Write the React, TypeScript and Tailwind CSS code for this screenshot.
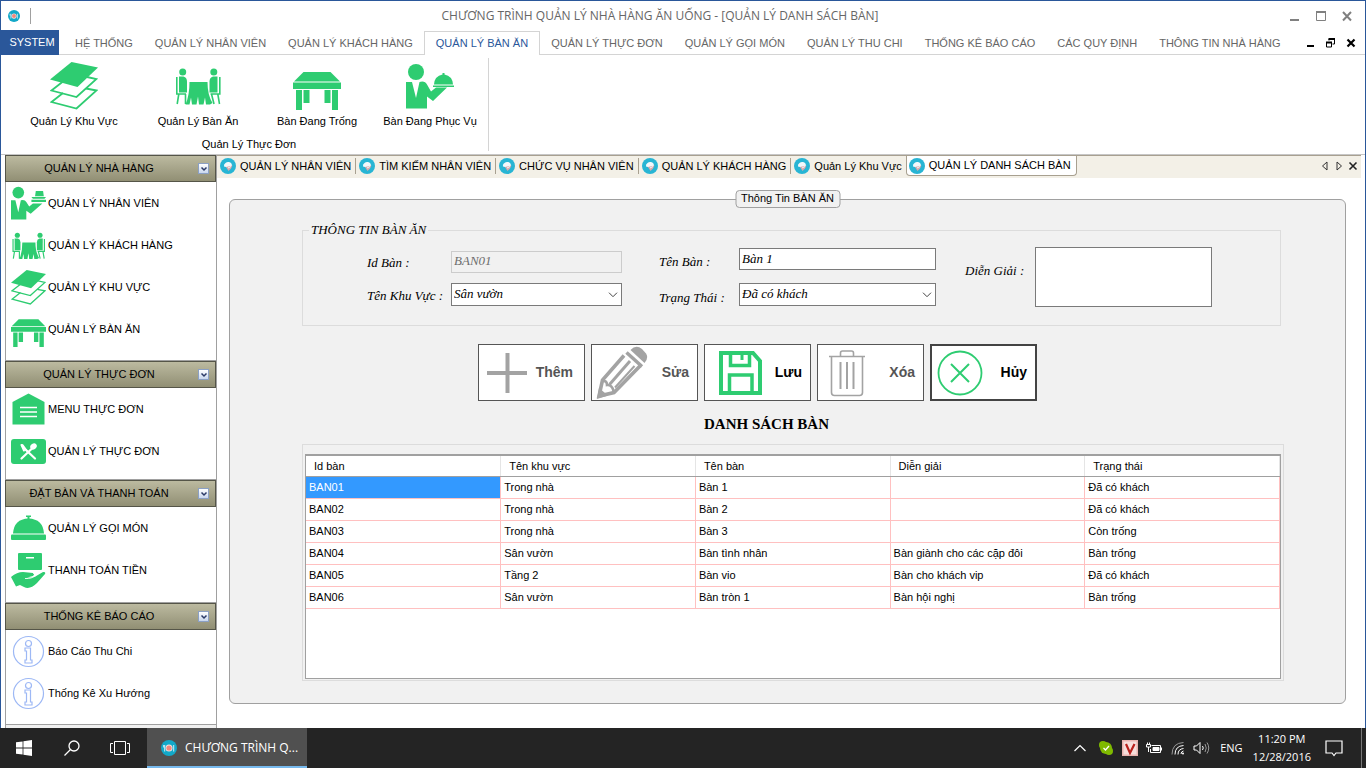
import React, { useState } from "react";

type IconProps = { className?: string };

const GREEN = "#2ecc71";

function LayersIcon({ className }: IconProps) {
  return (
    <svg viewBox="0 0 48 48" className={className} aria-hidden="true">
      <g fill="none" stroke={GREEN} strokeWidth="1.800" strokeLinejoin="miter">
        <path d="M13 31 L1.500 40 L26.500 46.500 L46.500 28.500 L36 26.500" />
        <path d="M13 19.500 L1.500 28.500 L26.500 35 L46.500 17 L37 15" />
      </g>
      <path d="M21.500 0 L48 5.500 L27.500 25 L0 17.500 Z" fill={GREEN} />
    </svg>
  );
}

function DinersIcon({ className }: IconProps) {
  return (
    <svg viewBox="0 0 48 48" className={className} aria-hidden="true">
      <g fill={GREEN}>
        <circle cx="8.700" cy="10" r="3.500" />
        <circle cx="39.800" cy="10" r="3.500" />
        <path d="M5 14.500 h4.500 q3.500 1 3.500 5 v11 h-8 z" />
        <path d="M43.500 14.500 h-4.500 q-3.500 1 -3.500 5 v11 h8 z" />
        <path d="M15 20 h18.500 q0 13 5 21 l-2.500 1.500 h-4 l-1 -7 l-1.500 7 h-4.500 l-1 -8 l-1.500 8 h-4.500 l-1 -7 l-1.500 7 h-4 q4 -9 4 -22.500z" />
      </g>
      <g fill="none" stroke={GREEN} strokeWidth="1.600">
        <path d="M2.800 15 V32 H12 M4.800 32 L3.200 42 M11.500 32 V42" />
        <path d="M45.800 15 V32 H36.500 M43.800 32 L45.500 42 M37.500 32 L40 42" />
      </g>
    </svg>
  );
}

function TableIcon({ className }: IconProps) {
  return (
    <svg viewBox="0 0 48 48" className={className} aria-hidden="true">
      <g fill={GREEN}>
        <path d="M10.500 10 H37.500 L47 19.500 H1 Z" />
        <path d="M0 20.500 H48 V27 H0 Z M3 28 H9 V48 H3 Z M39 28 H45 V48 H39 Z M10.500 28 H16.500 V41 H10.500 Z M31.500 28 H37.500 V41 H31.500 Z" />
      </g>
    </svg>
  );
}

function WaiterIcon({ className }: IconProps) {
  return (
    <svg viewBox="0 0 48 48" className={className} aria-hidden="true">
      <g fill={GREEN}>
        <circle cx="10" cy="10" r="8" />
        <path d="M0 20 H6 L10 36 L13.500 20 Q19 18.500 21 22.500 L25 29.500 L30 25.500 H41 L27 39 L21 34.500 V46.500 H0 Z" />
        <path d="M28 22.500 Q28.500 14 36.500 12.500 V11 H38.500 V12.500 Q46.500 14 47 22.500 Z M27 23.500 H48 V25 H27 Z" />
      </g>
    </svg>
  );
}

function StewardIcon({ className }: IconProps) {
  return (
    <svg viewBox="0 0 48 48" className={className} aria-hidden="true">
      <g fill={GREEN}>
        <circle cx="10" cy="9" r="8" />
        <path d="M0 19.500 H6 L10 36 L13.500 19.500 Q19 18 21 22 L25 28 L30 24 H43 L27 38 L21 34 V46 H0 Z" />
        <path d="M34 7 H44 L45 14 H33 Z M28 15 H48 L46 17.500 H30 Z M28 19 H48 V22 H28 Z" />
      </g>
    </svg>
  );
}

function MenuHouseIcon({ className }: IconProps) {
  return (
    <svg viewBox="0 0 35 35" className={className} aria-hidden="true">
      <path d="M17.500 1.500 L33.500 10 V32.500 H1.500 V10 Z" fill={GREEN} />
      <path d="M9 15.500 H26 M9 20 H26 M9 24.500 H26" stroke="#fff" strokeWidth="1.300" />
    </svg>
  );
}

function CutleryIcon({ className }: IconProps) {
  return (
    <svg viewBox="0 0 35 35" className={className} aria-hidden="true">
      <rect x="0" y="5" width="35" height="25" rx="3" fill={GREEN} />
      <g stroke="#fff" strokeLinecap="round" fill="none">
        <path d="M11.500 11 L15.500 16.500 M10.500 11 L13 16.500" strokeWidth="2" />
        <path d="M15 16 L24 24.500" strokeWidth="2.200" />
        <path d="M10.500 24.500 L21 14.500" strokeWidth="2.200" />
      </g>
      <ellipse cx="22.500" cy="12.500" rx="3.500" ry="2.800" transform="rotate(-40 22.500 12.500)" fill="#fff" />
    </svg>
  );
}

function ClocheIcon({ className }: IconProps) {
  return (
    <svg viewBox="0 0 35 35" className={className} aria-hidden="true">
      <g fill={GREEN}>
        <path d="M2 22.500 Q3 8 17.500 7.500 Q32 8 33 22.500 Z" />
        <path d="M15 4.500 H20 V6 H18.500 V8 H16.500 V6 H15 Z" />
        <rect x="0" y="23.500" width="35" height="5.500" rx="1" />
      </g>
    </svg>
  );
}

function HandBoxIcon({ className }: IconProps) {
  return (
    <svg viewBox="0 0 35 35" className={className} aria-hidden="true">
      <rect x="7" y="0" width="24" height="17" rx="1" fill={GREEN} />
      <rect x="15" y="4" width="8" height="1.500" fill="#fff" />
      <path d="M0 24 Q6 19 12 19 L22 20 Q24 21 22 23 L16 24.500 Q23 25 26 22.500 L32 19 Q35 18.500 34 21 L26 30 Q19 37 13 34 L9 32 L5 33.500 Z" fill={GREEN} />
      <path d="M14 25.500 Q21 26 25 22 M22 20.500 L26 19.500" stroke="#fff" strokeWidth="0.900" fill="none" />
    </svg>
  );
}

function InfoIcon({ className }: IconProps) {
  return (
    <svg viewBox="0 0 35 35" className={className} aria-hidden="true">
      <g fill="none" stroke="#9db8f5" strokeWidth="1.200">
        <circle cx="17.500" cy="17.500" r="15" />
        <circle cx="17.500" cy="9.500" r="3" />
        <path d="M14 14 H19.500 V26 H21 V29 H14 V26 H15.500 V17 H14 Z" />
      </g>
    </svg>
  );
}

function PlateIcon({ className }: IconProps) {
  return (
    <svg viewBox="0 0 16 16" className={className} aria-hidden="true">
      <circle cx="8" cy="8" r="8" fill="#12a8c8" />
      <circle cx="8" cy="8" r="3.500" fill="#f6e3e0" />
      <circle cx="8" cy="8" r="2.600" fill="#f0877c" />
      <path d="M2.700 5 V7.500 M3.700 5 V11.500 M12.700 5 V11.500" stroke="#e8f6fa" strokeWidth="0.900" />
    </svg>
  );
}

function DocIcon({ className }: IconProps) {
  return (
    <svg viewBox="0 0 16 16" className={className} aria-hidden="true">
      <circle cx="8" cy="8" r="8" fill="#28b5d4" />
      <path d="M4 8.500 Q3.500 6 5.500 5 Q7 3.500 9 4 Q12 4.500 12 8 L8 9.500 Z" fill="#f2f8fb" />
      <path d="M6 9 L12.500 7.500 L11 10.500 L8.500 13 Z" fill="#dba9ac" />
      <path d="M8 10 L11 8.500" stroke="#f2f8fb" />
    </svg>
  );
}

function PlusArt() {
  return (
    <svg viewBox="0 0 50 50" className="size-[50px] shrink-0" aria-hidden="true">
      <path d="M4 25 H44 M24.500 5 V45" stroke="#a3a3a3" strokeWidth="4" />
    </svg>
  );
}

function PencilArt() {
  return (
    <svg viewBox="0 0 54 54" className="size-[54px] shrink-0" aria-hidden="true">
      <g fill="none" stroke="#a3a3a3">
        <path d="M28 9.500 L6.500 34 L3 50 L18 46.500 L44.500 19.500" strokeWidth="3.600" />
        <path d="M7 35 Q11 34.500 11 39 Q16 38.500 17.500 45" strokeWidth="2.600" />
        <path d="M13.500 38.500 L34 15" strokeWidth="3" />
        <path d="M19 41.500 L38.500 20" strokeWidth="2" />
        <path d="M30.500 6.500 L46 20.500" strokeWidth="3.500" />
      </g>
      <path d="M34.500 4 Q40 -2 46 3 L50 7.500 Q53 11.500 48.500 17 Z" fill="#a3a3a3" />
      <path d="M3 42 L1 53 L12 49.500 Z" fill="#a3a3a3" />
    </svg>
  );
}

function SaveArt() {
  return (
    <svg viewBox="0 0 50 50" className="size-[50px] shrink-0" aria-hidden="true">
      <g fill="none" stroke={GREEN}>
        <path d="M7 5 H39 L46 13 V45 H7 Z" strokeWidth="4" />
        <path d="M16.500 5 V17.500 H35.500 V5" strokeWidth="3.500" />
        <path d="M28 6 V12" strokeWidth="3" />
        <path d="M15.500 45 V27 H38 V45" strokeWidth="3.500" />
      </g>
    </svg>
  );
}

function TrashArt() {
  return (
    <svg viewBox="0 0 50 50" className="size-[50px] shrink-0" aria-hidden="true">
      <g fill="none" stroke="#a3a3a3" strokeWidth="1.600">
        <path d="M7 8.500 H43" />
        <path d="M18.500 8.500 V5 Q18.500 3 20.500 3 H29.500 Q31.500 3 31.500 5 V8.500" />
        <path d="M9.500 9 V44.500 Q9.500 47.500 12.500 47.500 H37.500 Q40.500 47.500 40.500 44.500 V9" />
        <path d="M18.500 14 V41 M25 14 V41 M31.500 14 V41" strokeWidth="2" />
      </g>
    </svg>
  );
}

function CancelArt() {
  return (
    <svg viewBox="0 0 50 50" className="size-[50px] shrink-0" aria-hidden="true">
      <g fill="none" stroke={GREEN} strokeWidth="1.800">
        <circle cx="25" cy="25" r="21.500" />
        <path d="M16 16 L34 34 M34 16 L16 34" strokeWidth="2" />
      </g>
    </svg>
  );
}

const ribbonTabs = [
  "HỆ THỐNG",
  "QUẢN LÝ NHÂN VIÊN",
  "QUẢN LÝ KHÁCH HÀNG",
  "QUẢN LÝ BÀN ĂN",
  "QUẢN LÝ THỰC ĐƠN",
  "QUẢN LÝ GỌI MÓN",
  "QUẢN LÝ THU CHI",
  "THỐNG KÊ BÁO CÁO",
  "CÁC QUY ĐỊNH",
  "THÔNG TIN NHÀ HÀNG",
];

const ribbonItems = [
  { label: "Quản Lý Khu Vực", icon: LayersIcon, width: "w-[124px]" },
  { label: "Quản Lý Bàn Ăn", icon: DinersIcon, width: "w-[124px]" },
  { label: "Bàn Đang Trống", icon: TableIcon, width: "w-[114px]" },
  { label: "Bàn Đang Phục Vụ", icon: WaiterIcon, width: "w-[112px]" },
];

const sections = [
  {
    title: "QUẢN LÝ NHÀ HÀNG",
    pad: "pb-2.5",
    items: [
      { label: "QUẢN LÝ NHÂN VIÊN", icon: StewardIcon },
      { label: "QUẢN LÝ KHÁCH HÀNG", icon: DinersIcon },
      { label: "QUẢN LÝ KHU VỰC", icon: LayersIcon },
      { label: "QUẢN LÝ BÀN ĂN", icon: TableIcon },
    ],
  },
  {
    title: "QUẢN LÝ THỰC ĐƠN",
    pad: "pb-[7px]",
    items: [
      { label: "MENU THỰC ĐƠN", icon: MenuHouseIcon },
      { label: "QUẢN LÝ THỰC ĐƠN", icon: CutleryIcon },
    ],
  },
  {
    title: "ĐẶT BÀN VÀ THANH TOÁN",
    pad: "pb-[11px]",
    items: [
      { label: "QUẢN LÝ GỌI MÓN", icon: ClocheIcon },
      { label: "THANH TOÁN TIỀN", icon: HandBoxIcon },
    ],
  },
  {
    title: "THỐNG KÊ BÁO CÁO",
    pad: "pb-2.5",
    items: [
      { label: "Báo Cáo Thu Chi", icon: InfoIcon },
      { label: "Thống Kê Xu Hướng", icon: InfoIcon },
    ],
  },
];

const docTabs = [
  "QUẢN LÝ NHÂN VIÊN",
  "TÌM KIẾM NHÂN VIÊN",
  "CHỨC VỤ NHÂN VIÊN",
  "QUẢN LÝ KHÁCH HÀNG",
  "Quản Lý Khu Vực",
];

const columns = ["Id bàn", "Tên khu vực", "Tên bàn", "Diễn giải", "Trạng thái"];

const rows = [
  ["BAN01", "Trong nhà", "Bàn 1", "", "Đã có khách"],
  ["BAN02", "Trong nhà", "Bàn 2", "", "Đã có khách"],
  ["BAN03", "Trong nhà", "Bàn 3", "", "Còn trống"],
  ["BAN04", "Sân vườn", "Bàn tình nhân", "Bàn giành cho các cặp đôi", "Bàn trống"],
  ["BAN05", "Tầng 2", "Bàn vio", "Bàn cho khách vip", "Đã có khách"],
  ["BAN06", "Sân vườn", "Bàn tròn 1", "Bàn hội nghị", "Bàn trống"],
];

function TitleBar() {
  return (
    <header className="flex h-[29px] items-center pl-[7px] pr-3">
      <PlateIcon className="size-3" />
      <span className="ml-2.5 h-4 w-px bg-[#a0a0a0]" />
      <h1 className="flex-1 text-center font-['Open_Sans',sans-serif] text-[12px] leading-4 text-[#666]">
        CHƯƠNG TRÌNH QUẢN LÝ NHÀ HÀNG ĂN UỐNG - [QUẢN LÝ DANH SÁCH BÀN]
      </h1>
      <div className="flex items-center gap-3.5">
        <button type="button" aria-label="Minimize" className="size-3">
          <svg viewBox="0 0 12 12" className="size-3"><path d="M1 10 H10" stroke="#808080" strokeWidth="2" /></svg>
        </button>
        <button type="button" aria-label="Maximize" className="size-3">
          <svg viewBox="0 0 12 12" className="size-3"><path d="M1 1 H11 V3 H1 Z" fill="#808080" /><path d="M1.500 1.500 H10.500 V10.500 H1.500 Z" fill="none" stroke="#808080" /></svg>
        </button>
        <button type="button" aria-label="Close" className="size-3">
          <svg viewBox="0 0 12 12" className="size-3"><path d="M2 2 L10 10.500 M10 2 L2 10.500" stroke="#808080" strokeWidth="2" /></svg>
        </button>
      </div>
    </header>
  );
}

function RibbonTabs() {
  return (
    <nav className="flex h-[25px] items-stretch border-b border-[#d4d4d4] text-[#666]">
      <button type="button" className="-mb-px w-[58px] bg-[#2a579a] pl-1 text-white">SYSTEM</button>
      <div className="ml-[5px] flex flex-1">
        {ribbonTabs.map((tab) => (
          <button
            key={tab}
            type="button"
            className={
              tab === "QUẢN LÝ BÀN ĂN"
                ? "-mb-px mt-px border border-b-0 border-[#d4d4d4] bg-white px-[11px] whitespace-nowrap text-[#2a579a]"
                : "px-[11px] pt-0.5 whitespace-nowrap"
            }
          >
            {tab}
          </button>
        ))}
      </div>
      <div className="flex items-center gap-2 pr-2">
        <button type="button" aria-label="Minimize document" className="size-3">
          <svg viewBox="0 0 12 12" className="size-3"><path d="M2 10 H9" stroke="#000" strokeWidth="2" /></svg>
        </button>
        <button type="button" aria-label="Restore document" className="size-3">
          <svg viewBox="0 0 12 12" className="size-3"><path d="M4 4.500 V3 H9.500 V8 H7.500 M1.500 6.500 H6.500 V11 H1.500 Z" fill="none" stroke="#000" /><path d="M3.500 3 H10 M1 6.500 H7" stroke="#000" strokeWidth="2" /></svg>
        </button>
        <button type="button" aria-label="Close document" className="size-3">
          <svg viewBox="0 0 12 12" className="size-3"><path d="M2.500 3.500 L9.500 10.500 M9.500 3.500 L2.500 10.500" stroke="#000" strokeWidth="2.200" /></svg>
        </button>
      </div>
    </nav>
  );
}

function Ribbon() {
  return (
    <div className="flex h-[100px] border-b border-[#c6c6c6] pt-[3px]">
      <section className="flex h-[93px] flex-col border-r border-[#d4d4d4] pr-0.5 pl-[11px] text-black">
        <div className="flex">
          {ribbonItems.map(({ label, icon: Icon, width }) => (
            <button key={label} type="button" className={`flex flex-col items-center pt-1 ${width}`}>
              <Icon className="size-12" />
              <span className="mt-[3px] leading-4 whitespace-nowrap">{label}</span>
            </button>
          ))}
        </div>
        <p className="mt-[7px] text-center leading-4">Quản Lý Thực Đơn</p>
      </section>
    </div>
  );
}

function Sidebar() {
  return (
    <aside className="ml-1 flex w-[212px] shrink-0 flex-col overflow-hidden border-r border-[#a0a0a0] bg-[#f0f0f0]">
      {sections.map((section) => (
        <section key={section.title} className="shrink-0">
          <h2 className="flex h-[27px] items-center border border-[#555548] bg-linear-to-b from-[#bcbaa0] to-[#918f74] pr-1.5">
            <span className="flex-1 pr-1.5 text-center">{section.title}</span>
            <button type="button" aria-label={section.title} className="flex size-[11px] items-center justify-center border border-[#8ba0c4] bg-linear-to-b from-white to-[#c9d7ee]">
              <svg viewBox="0 0 8 8" className="size-2"><path d="M1.500 2.500 L4 5 L6.500 2.500" fill="none" stroke="#2b3a66" strokeWidth="1.500" /></svg>
            </button>
          </h2>
          <ul className={`border-b border-l border-[#a0a0a0] bg-white ${section.pad}`}>
            {section.items.map(({ label, icon: Icon }) => (
              <li key={label}>
                <a href="#" className="flex h-[42px] items-center gap-0.5 pt-px pl-[5px]">
                  <Icon className="size-[35px]" />
                  {label}
                </a>
              </li>
            ))}
          </ul>
        </section>
      ))}
      <div className="flex-1 border-l border-[#a0a0a0]" />
    </aside>
  );
}

function DocumentTabs() {
  return (
    <div className="mr-1 flex h-[23px] items-start border-t border-[#a8a090] bg-[#f3f0e7]">
      {docTabs.map((tab, i) => (
        <button
          key={tab}
          type="button"
          className={`my-0.5 flex h-4 items-center gap-1 pl-[3px] pr-1 whitespace-nowrap ${i < docTabs.length - 1 ? "border-r border-[#a8a090]" : ""}`}
        >
          <DocIcon className="size-4" />
          {tab}
        </button>
      ))}
      <button type="button" className="flex h-5 items-center gap-1 rounded-b-sm border border-t-0 border-[#a8a090] bg-white pl-0.5 pr-[5px] whitespace-nowrap">
        <DocIcon className="size-4" />
        QUẢN LÝ DANH SÁCH BÀN
      </button>
      <div className="ml-auto flex h-5 items-center gap-1 pr-[3px]">
        <button type="button" aria-label="Previous tab" className="size-2.5">
          <svg viewBox="0 0 10 10" className="size-2.5"><path d="M7 1 V9 L2.500 5 Z" fill="none" stroke="#333" /></svg>
        </button>
        <button type="button" aria-label="Next tab" className="size-2.5">
          <svg viewBox="0 0 10 10" className="size-2.5"><path d="M3 1 V9 L7.500 5 Z" fill="none" stroke="#333" /></svg>
        </button>
        <button type="button" aria-label="Close tab" className="size-2.5">
          <svg viewBox="0 0 10 10" className="size-2.5"><path d="M1.500 1.500 L8.500 8.500 M8.500 1.500 L1.500 8.500" stroke="#222" strokeWidth="1.600" /></svg>
        </button>
      </div>
    </div>
  );
}

function Choice({ id, value, options }: { id: string; value: string; options: string[] }) {
  const [current, setCurrent] = useState(value);
  return (
    <div className="relative h-[23px]">
      <select
        id={id}
        value={current}
        onChange={(e) => setCurrent(e.target.value)}
        className="block h-[23px] w-full appearance-none border border-[#7a7a7a] bg-white pr-5 pb-0.5 pl-0.5 italic outline-none"
      >
        {options.map((o) => (
          <option key={o}>{o}</option>
        ))}
      </select>
      <svg viewBox="0 0 10 6" className="pointer-events-none absolute top-[9px] right-1 h-1.5 w-2.5" aria-hidden="true">
        <path d="M1 0.700 L5 4.700 L9 0.700" fill="none" stroke="#444" />
      </svg>
    </div>
  );
}

function TableForm() {
  return (
    <fieldset className="h-[104px] min-w-0 border border-[#dcdcdc] pl-16 pr-2 font-['Liberation_Serif',serif] text-[13px] leading-4 italic">
      <legend className="-ml-[58px] px-0.5">THÔNG TIN BÀN ĂN</legend>
      <div className="flex items-start">
        <div className="mt-[13px] grid grid-cols-[84px_171px] items-center gap-y-2.5">
          <label htmlFor="table-id" className="pt-0.5">Id Bàn :</label>
          <input id="table-id" disabled defaultValue="BAN01" className="h-[22px] min-w-0 border border-[#ccc] bg-[#f1f1f1] pb-0.5 pl-0.5 text-[#6d6d6d] italic" />
          <label htmlFor="area" className="pt-0.5">Tên Khu Vực :</label>
          <Choice id="area" value="Sân vườn" options={["Sân vườn", "Trong nhà", "Tầng 2"]} />
        </div>
        <div className="mt-2.5 ml-[37px] grid grid-cols-[80px_197px] items-center gap-y-[13px]">
          <label htmlFor="table-name" className="pt-1.5">Tên Bàn :</label>
          <input id="table-name" defaultValue="Bàn 1" className="h-[22px] min-w-0 border border-[#7a7a7a] bg-white pl-0.5 italic outline-none" />
          <label htmlFor="state" className="pt-1.5">Trạng Thái :</label>
          <Choice id="state" value="Đã có khách" options={["Đã có khách", "Còn trống", "Bàn trống"]} />
        </div>
        <div className="mt-[9px] ml-[29px] flex items-start">
          <label htmlFor="note" className="w-[70px] pt-4">Diễn Giải :</label>
          <textarea id="note" className="block h-[60px] w-[177px] resize-none border border-[#7a7a7a] bg-white outline-none" />
        </div>
      </div>
    </fieldset>
  );
}

const actionBase = "flex h-[57px] w-[107px] items-center justify-between bg-white pr-2 font-['Liberation_Sans',sans-serif] text-[14px] font-bold";

function Actions() {
  return (
    <div className="mt-[18px] ml-44 flex gap-1.5">
      <button type="button" className={`${actionBase} border border-[#555] pl-1 text-[#555]`}><PlusArt /><span className="pr-[3px]">Thêm</span></button>
      <button type="button" className={`${actionBase} border border-[#555] pl-1 text-[#555]`}><PencilArt />Sửa</button>
      <button type="button" className={`${actionBase} border border-[#555] pl-[9px] text-black`}><SaveArt />Lưu</button>
      <button type="button" className={`${actionBase} border border-[#555] pl-1 text-[#555]`}><TrashArt />Xóa</button>
      <button type="button" className={`${actionBase} border-2 border-[#444] pl-[3px] text-black`}><CancelArt />Hủy</button>
    </div>
  );
}

function TableList() {
  return (
    <div className="-mr-[3px] mt-2.5 flex min-h-0 flex-1 flex-col border border-[#dcdcdc] pt-[9px] pr-0.5 pb-px pl-0.5">
      <div className="min-h-0 flex-1 overflow-hidden border border-t-2 border-[#a0a0a0] bg-white">
        <table className="w-full table-fixed border-collapse text-black">
          <thead>
            <tr className="h-5">
              {columns.map((c) => (
                <th key={c} className="border-r border-b border-r-[#e5e5e5] border-b-[#a0a0a0] p-0 pl-2 text-left font-normal leading-4">{c}</th>
              ))}
            </tr>
          </thead>
          <tbody>
            {rows.map((row) => (
              <tr key={row[0]} className="h-[22px]">
                {row.map((cell, i) => (
                  <td
                    key={i}
                    className={`border-r border-b border-[#ffc0c0] p-0 pl-[3px] leading-4 ${cell === "BAN01" ? "bg-[#3399ff] text-white" : ""}`}
                  >
                    {cell}
                  </td>
                ))}
              </tr>
            ))}
          </tbody>
        </table>
      </div>
    </div>
  );
}

function Workspace() {
  return (
    <main className="flex min-w-0 flex-1 flex-col">
      <DocumentTabs />
      <div className="flex min-h-0 flex-1 flex-col pt-[21px] pr-[19px] pb-6 pl-3">
        <section className="relative flex min-h-0 flex-1 flex-col rounded-md border border-[#a0a0a0] bg-[#f1f1f1] pt-[22px] pr-16 pb-[22px] pl-[72px]">
          <h2 className="absolute -top-2.5 left-1/2 h-[18px] w-[105px] -translate-x-1/2 rounded-sm border border-[#a0a0a0] bg-[#f1f1f1] text-center leading-[15px] whitespace-nowrap">
            Thông Tin BÀN ĂN
          </h2>
          <TableForm />
          <Actions />
          <h3 className="mt-[13px] ml-[402px] font-['Liberation_Serif',serif] text-[15px] leading-5 font-bold">DANH SÁCH BÀN</h3>
          <TableList />
        </section>
      </div>
    </main>
  );
}

function Taskbar() {
  return (
    <footer className="flex h-10 shrink-0 items-stretch bg-[#242424] font-['Open_Sans',sans-serif] text-[11px] text-white">
      <button type="button" aria-label="Start" className="flex w-12 items-center justify-center">
        <svg viewBox="0 0 16 16" className="size-4"><path d="M0 2.300 L6.600 1.400 V7.600 H0 Z M7.400 1.300 L16 0 V7.600 H7.400 Z M0 8.400 H6.600 V14.600 L0 13.700 Z M7.400 8.400 H16 V16 L7.400 14.700 Z" fill="#fff" /></svg>
      </button>
      <button type="button" aria-label="Search" className="flex w-12 items-center justify-center">
        <svg viewBox="0 0 16 16" className="size-4" fill="none" stroke="#fff" strokeWidth="1.300"><circle cx="10" cy="6" r="5" /><path d="M6.500 9.500 L0.500 15.500" /></svg>
      </button>
      <button type="button" aria-label="Task view" className="flex w-12 items-center justify-center">
        <svg viewBox="0 0 20 14" className="h-3.5 w-5" fill="none" stroke="#fff"><path d="M4.500 0.500 H15.500 V13.500 H4.500 Z M3 2.500 H0.500 V11.500 H3 M17 2.500 H19.500 V11.500 H17" /></svg>
      </button>
      <button type="button" className="ml-[3px] flex w-40 items-center border-b-2 border-[#76b9ed] bg-[#505050] pt-0.5 pl-3.5 text-[12px] whitespace-nowrap">
        <PlateIcon className="size-4" />
        <span className="ml-2">CHƯƠNG TRÌNH Q...</span>
      </button>
      <div className="ml-auto flex items-center">
        <svg viewBox="0 0 12 8" className="mr-3 h-2 w-3" fill="none" stroke="#fff" strokeWidth="1.200"><path d="M0.500 7 L6 1.500 L11.500 7" /></svg>
        <svg viewBox="0 0 16 16" className="mr-2 size-4"><circle cx="8" cy="8" r="6" fill="#7fba00" /><circle cx="5" cy="5" r="4" fill="#7fba00" /><circle cx="11" cy="11" r="4" fill="#7fba00" /><path d="M5.500 8 L7.500 10 L11 6" stroke="#fff" fill="none" strokeWidth="1.300" /></svg>
        <svg viewBox="0 0 16 16" className="mr-2 size-4"><rect width="16" height="16" fill="#e8b4b0" /><rect x="1.500" y="1.500" width="13" height="13" fill="#f6dedb" /><path d="M4 4 L8 13 L12.500 4" fill="none" stroke="#b8201c" strokeWidth="2.200" /></svg>
        <svg viewBox="0 0 16 12" className="mr-[9px] h-3 w-4" fill="none" stroke="#fff"><path d="M5.500 3.500 H14.500 V10.500 H4.500 V7 M15.500 5.500 V8.500 M0.500 2.500 H4.500 V5 H0.500 Z M1.500 0.500 V2.500 M3.500 0.500 V2.500 M2.500 5 V10" /><path d="M7 5.500 H13 V8.500 H7 Z" fill="#fff" /></svg>
        <svg viewBox="0 0 14 14" className="mr-2 size-3.5" fill="none" stroke="#fff"><path d="M10 13 Q10 10.500 12.500 10 M7 13.500 Q7 8 12.500 7.500 M4 13.500 Q4 5 12.500 4.500" /><path d="M1 13.500 Q1 2 12.500 1.500" stroke="#999" /><circle cx="12" cy="12.500" r="1" fill="#fff" stroke="none" /></svg>
        <svg viewBox="0 0 17 14" className="mr-2.5 h-3.5 w-[17px]" fill="none" stroke="#fff"><path d="M1 5 H3.500 L7 1.500 V12.500 L3.500 9 H1 Z M9.500 5 Q11 7 9.500 9" /><path d="M12 3 Q14.500 7 12 11 M14 1.500 Q17.500 7 14 12.500" stroke="#999" /></svg>
        <span>ENG</span>
        <time className="mx-2.5 text-center leading-[18px]">11:20 PM<br />12/28/2016</time>
        <svg viewBox="0 0 18 18" className="ml-1 size-[18px]" fill="none" stroke="#fff" strokeWidth="1.200"><path d="M1 2 H17 V14 H11 L9 16.500 L7 14 H1 Z" /></svg>
        <span className="ml-[18px] h-10 w-[5px] border-l border-[#777]" />
      </div>
    </footer>
  );
}

export default function App() {
  return (
    <div className="flex h-screen min-h-[768px] flex-col font-['Liberation_Sans',Arial,sans-serif] text-[11px] text-black">
      <div className="flex min-h-0 flex-1 flex-col border-x border-t border-[#2a579a] bg-white">
        <TitleBar />
        <RibbonTabs />
        <Ribbon />
        <div className="flex min-h-0 flex-1">
          <Sidebar />
          <Workspace />
        </div>
      </div>
      <Taskbar />
    </div>
  );
}
